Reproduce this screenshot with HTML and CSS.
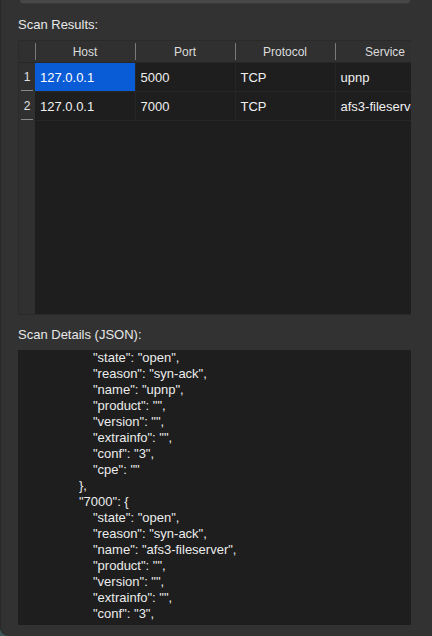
FILE: index.html
```html
<!DOCTYPE html>
<html>
<head>
<meta charset="utf-8">
<link rel="stylesheet" href="styles.css">
</head>
<body>
<div class="window">
  <div class="topbar"></div>
  <div class="label first">Scan Results:</div>
  <div class="grid">
    <table>
      <colgroup><col class="c-num"><col class="c-col"><col class="c-col"><col class="c-col"><col class="c-col"></colgroup>
      <thead>
        <tr><th class="corner"></th><th>Host</th><th>Port</th><th>Protocol</th><th>Service</th></tr>
      </thead>
      <tbody>
        <tr><td class="num">1</td><td class="sel">127.0.0.1</td><td>5000</td><td>TCP</td><td>upnp</td></tr>
        <tr><td class="num">2</td><td>127.0.0.1</td><td>7000</td><td>TCP</td><td>afs3-fileserver</td></tr>
      </tbody>
    </table>
  </div>
  <div class="label second">Scan Details (JSON):</div>
  <div class="json">
    <div class="l4">"state": "open",</div>
    <div class="l4">"reason": "syn-ack",</div>
    <div class="l4">"name": "upnp",</div>
    <div class="l4">"product": "",</div>
    <div class="l4">"version": "",</div>
    <div class="l4">"extrainfo": "",</div>
    <div class="l4">"conf": "3",</div>
    <div class="l4">"cpe": ""</div>
    <div class="l3">},</div>
    <div class="l3">"7000": {</div>
    <div class="l4">"state": "open",</div>
    <div class="l4">"reason": "syn-ack",</div>
    <div class="l4">"name": "afs3-fileserver",</div>
    <div class="l4">"product": "",</div>
    <div class="l4">"version": "",</div>
    <div class="l4">"extrainfo": "",</div>
    <div class="l4">"conf": "3",</div>
  </div>
</div>
</body>
</html>
```
FILE: styles.css
```css
html {
  background: #3a5755;
}
body {
  margin: 0;
  font-family: "Liberation Sans", Arial, sans-serif;
  font-size: 13px;
  color: #e6e6e6;
}
.window {
  height: 636px;
  background: #323232;
  box-shadow: inset 1px 0 #282828;
  border-bottom-left-radius: 9px;
  padding: 0 21px 0 18px;
  box-sizing: border-box;
  display: flex;
  flex-direction: column;
  overflow: hidden;
}
.topbar {
  height: 3px;
  margin: 0 1px 0 2px;
  background: #474747;
  border-radius: 0 0 4px 4px;
  box-shadow: 0 1px 0 #3a3a3a;
}
.label {
  line-height: 16px;
  color: #e8e8e8;
}
.label.first {
  margin-top: 14px;
  margin-bottom: 7px;
}
.label.second {
  margin-top: 12px;
  margin-bottom: 7px;
}
.grid {
  height: 275px;
  box-sizing: border-box;
  border: 1px solid #2a2a2a;
  border-right: 0;
  background: linear-gradient(to right, #303030 16px, #1e1e1e 16px);
  overflow: hidden;
}
.grid table {
  border-collapse: collapse;
  table-layout: fixed;
  width: 416px;
}
.c-num { width: 16px; }
.c-col { width: 100px; }
th {
  height: 21px;
  padding: 0;
  font-size: 12px;
  font-weight: normal;
  color: #dcdcdc;
  text-align: center;
  background: linear-gradient(#7a7a7a, #7a7a7a) left center / 1px 17px no-repeat, #303030;
  border-bottom: 1px solid #262626;
}
th.corner {
  background: #303030;
}
td {
  height: 28px;
  padding: 0 0 0 5px;
  white-space: nowrap;
  overflow: hidden;
  color: #f0f0f0;
  border-right: 1px solid #262626;
  border-bottom: 1px solid #262626;
}
td.num {
  padding: 0;
  text-align: center;
  font-size: 12px;
  color: #e0e0e0;
  background: linear-gradient(#8a8a8a, #8a8a8a) center bottom / 12px 1px no-repeat, #303030;
  border-right: 0;
  border-bottom: 1px solid #303030;
}
td.sel {
  background: #0a5cd6;
  color: #ffffff;
}
.json {
  height: 275px;
  background: #1e1e1e;
  line-height: 16px;
  color: #ececec;
  overflow: hidden;
  white-space: nowrap;
}
.l3 { padding-left: 61px; }
.l4 { padding-left: 75px; }
```
